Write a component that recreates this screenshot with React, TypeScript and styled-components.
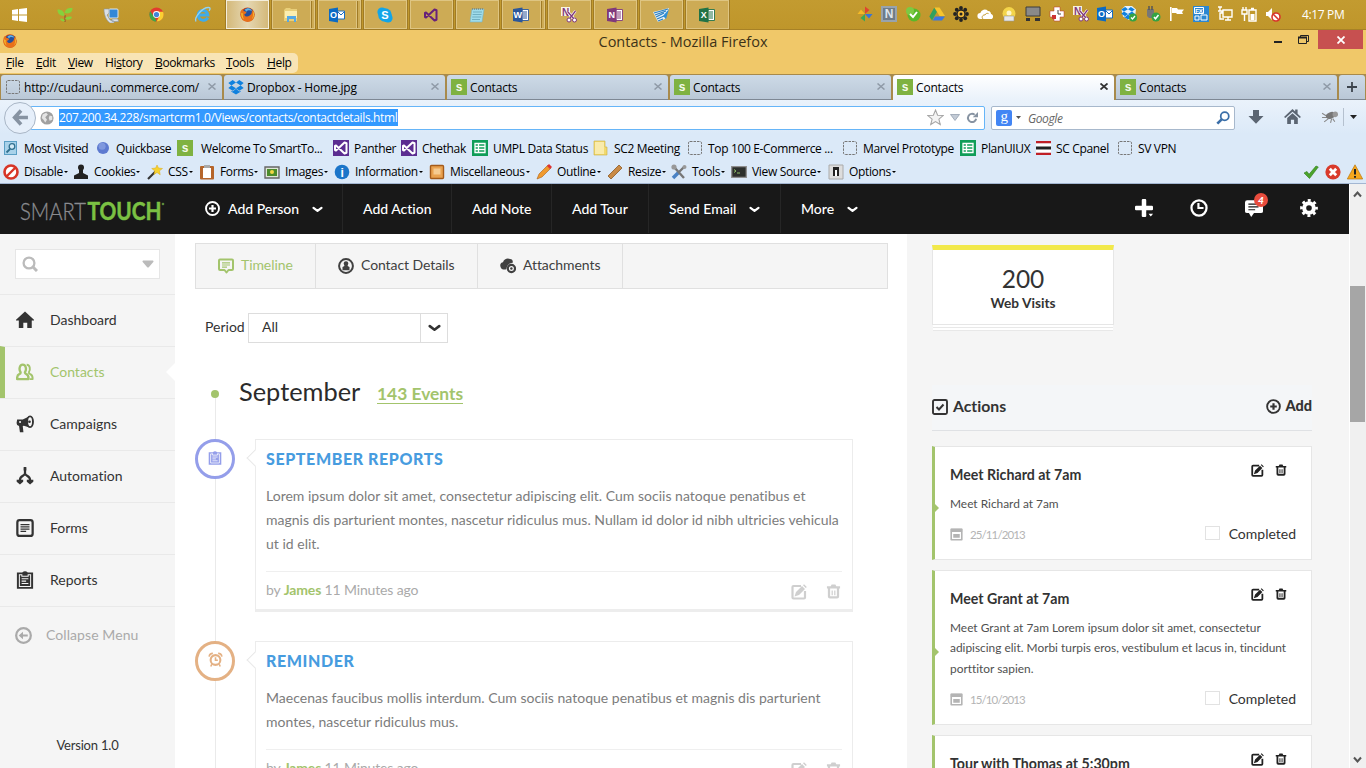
import React from 'react';
import styled, { createGlobalStyle, css } from 'styled-components';

const GREEN = '#a3c46c';
const UI = "'Open Sans', 'Noto Sans', sans-serif";
const SITE = "Lato, 'Liberation Sans', sans-serif";

const Global = createGlobalStyle`
  * { box-sizing: border-box; }
  body { margin: 0; overflow: hidden; font-family: ${SITE}; font-size: 14px; font-variant-ligatures: none; color: #333; background: #fff; }
  svg { display: block; flex: none; }
  p, h1, h2, h3 { margin: 0; }
`;

const Screen = styled.div`
  width: 1366px;
  height: 768px;
  display: flex;
  flex-direction: column;
  overflow: hidden;
`;

/* ---------- Taskbar ---------- */
const Taskbar = styled.div`
  height: 30px;
  display: flex;
  align-items: center;
  background: linear-gradient(#c39b30, #bf962b);
  border-bottom: 1px solid #a78126;
`;
const Pinned = styled.div`
  width: 226px;
  display: flex;
  align-items: center;
  padding-left: 12px;
  gap: 30px;
`;
const TaskButtons = styled.div`
  display: flex;
  gap: 3px;
  height: 29px;
`;
const TaskButton = styled.div<{ $active?: boolean; $stack?: boolean }>`
  width: 43px;
  height: 29px;
  display: flex;
  align-items: center;
  justify-content: center;
  padding-right: ${p => (p.$stack ? 5 : 1)}px;
  border: 1px solid ${p => (p.$active ? '#f4eedc' : '#dec582')};
  outline: 1px solid #a07b25;
  outline-offset: 0;
  background: ${p => (p.$active ? 'linear-gradient(90deg,#d4b97a,#e5d7b2,#d4b97a)' : '#cdab55')};
  ${p =>
    p.$stack &&
    css`
      background: linear-gradient(90deg, transparent 37px, #dec582 37px, #dec582 38px, #a07b25 38px, #a07b25 39px, transparent 39px) #cdab55;
    `}
`;
const Tray = styled.div`
  margin-left: auto;
  display: flex;
  align-items: center;
  gap: 8px;
  padding-bottom: 1px;
`;
const Clock = styled.span`
  width: 77px;
  flex: none;
  padding-left: 13px;
  color: #fff;
  font: 12px ${UI};
  letter-spacing: -0.35px;
  white-space: nowrap;
`;

/* ---------- Firefox chrome ---------- */
const TitleBar = styled.div`
  height: 23px;
  display: grid;
  grid-template-columns: 150px 1fr 150px;
  background: #f0c869;
`;
const TitleIcon = styled.div`
  padding: 4px 0 0 3px;
`;
const TitleText = styled.div`
  text-align: center;
  font: 14.5px/24px ${UI};
  color: #3c3218;
`;
const WindowButtons = styled.div`
  display: flex;
  justify-content: flex-end;
  gap: 9px;
  padding-right: 3px;
`;
const CloseButton = styled.div`
  width: 45px;
  height: 19px;
  display: flex;
  align-items: center;
  justify-content: center;
  background: #c75050;
`;
const MenuRow = styled.div`
  height: 21px;
  background: #f0c869;
`;
const MenuBar = styled.div`
  width: 298px;
  height: 20px;
  display: flex;
  align-items: center;
  padding-left: 6px;
  background: #f8e4b5;
  border-radius: 0 5px 5px 0;
`;
const MenuItem = styled.span<{ $w: number }>`
  width: ${p => p.$w}px;
  font: 12px/20px ${UI};
  letter-spacing: -0.36px;
  color: #000;
  white-space: nowrap;
`;
const TabStrip = styled.div`
  height: 26px;
  display: flex;
  gap: 2px;
  padding: 1px 1px 0;
  background: #a88a4b;
`;
const BrowserTab = styled.div<{ $active?: boolean }>`
  width: 221px;
  height: 25px;
  display: flex;
  align-items: center;
  gap: 3px;
  padding: 0 6px 0 4px;
  border-radius: 3px 3px 0 0;
  border-bottom: 1px solid ${p => (p.$active ? '#eaf2fb' : '#7e8894')};
  background: ${p => (p.$active ? 'linear-gradient(#fff,#eaf2fb)' : 'linear-gradient(#cddae7,#bac8d7)')};
  font: 12px/20px ${UI};
  letter-spacing: -0.18px;
  color: #000;
`;
const TabTitle = styled.span`
  flex: 1;
  padding-top: 2px;
  white-space: nowrap;
`;
const NewTab = styled(BrowserTab)`
  width: 26px;
  justify-content: center;
  padding: 0;
`;
const NavBar = styled.div`
  height: 34px;
  display: flex;
  align-items: center;
  background: linear-gradient(#eaf2fb, #dbe9f8);
`;
const BackButton = styled.div`
  width: 32px;
  height: 32px;
  flex: none;
  margin: 2px -6px 0 4px;
  z-index: 1;
  display: flex;
  align-items: center;
  justify-content: center;
  border: 1px solid #a9b6c6;
  border-radius: 50%;
  background: #e6effa;
`;
const UrlBar = styled.div`
  width: 955px;
  height: 24px;
  flex: none;
  margin-top: 2px;
  display: flex;
  align-items: center;
  padding: 0 6px 0 9px;
  background: #fff;
  border: 1px solid #66b5f8;
  border-radius: 2px;
`;
const UrlText = styled.span`
  margin: 0 auto 0 5px;
  width: 339px;
  height: 17px;
  background: #3399ff;
  color: #fff;
  font: 12px/18px ${UI};
  letter-spacing: -0.35px;
  white-space: nowrap;
`;
const UrlTools = styled.div`
  display: flex;
  align-items: center;
  gap: 6px;
`;
const SearchBar = styled.div`
  width: 244px;
  height: 24px;
  flex: none;
  margin: 2px 0 0 6px;
  display: flex;
  align-items: center;
  gap: 4px;
  padding: 0 4px;
  background: #fff;
  border: 1px solid #a7b8cc;
  border-radius: 2px;
  font: italic 12px ${UI};
  letter-spacing: -0.4px;
  color: #666;
`;
const SearchHint = styled.span`
  flex: 1;
  margin-left: 3px;
  padding-top: 1px;
`;
const NavTools = styled.div`
  flex: 1;
  height: 24px;
  display: flex;
  align-items: center;
  padding-left: 13px;
  gap: 20px;
`;
const OverflowToggle = styled.div`
  width: 16px;
  height: 18px;
  margin-left: -15px;
  display: flex;
  align-items: center;
  padding-left: 6px;
  border-left: 1px solid #b5c1cf;
`;
const LinkBar = styled.div<{ $dev?: boolean }>`
  height: ${p => (p.$dev ? 22 : 28)}px;
  display: flex;
  align-items: center;
  padding-left: ${p => (p.$dev ? 3 : 4)}px;
  background: #dbe9f8;
`;
const ChromeEdge = styled.div`
  height: 1px;
  background: #a3b6d1;
`;
const LinkItem = styled.div<{ $w: number }>`
  width: ${p => p.$w}px;
  display: flex;
  align-items: center;
  font: 12px/20px ${UI};
  letter-spacing: -0.34px;
  color: #000;
  white-space: nowrap;
`;
const LinkLabel = styled.span`
  padding-top: 2px;
`;
const LinkIcon = styled.span<{ $w: number }>`
  width: ${p => p.$w}px;
  flex: none;
`;
const Caret = styled.i`
  margin-left: 1px;
  border: 2.5px solid transparent;
  border-top-color: #000;
  border-bottom: 0;
`;
const Badges = styled.div`
  flex: 1;
  display: flex;
  justify-content: flex-end;
  gap: 6px;
  padding-right: 3px;
`;

/* ---------- Site ---------- */
const Viewport = styled.div`
  height: 584px;
  display: flex;
`;
const Site = styled.div`
  width: 1349px;
  display: flex;
  flex-direction: column;
`;
const ScrollBar = styled.div`
  width: 17px;
  display: flex;
  flex-direction: column;
  justify-content: space-between;
  border-left: 1px solid #fff;
  background: #f0f0f0;
  padding: 6px 1px 4px 0;
`;
const ScrollThumb = styled.div`
  width: 15px;
  height: 136px;
  margin: 88px 0 auto;
  background: #a6a6a6;
`;
const Header = styled.header`
  height: 50px;
  flex: none;
  display: flex;
  background: #181818;
  color: #fff;
`;
const Logo = styled.div`
  width: 175px;
  padding: 10px 0 0 20px;
`;
const HeaderItem = styled.div<{ $w: number; $last?: boolean }>`
  width: ${p => p.$w}px;
  height: 49px;
  display: flex;
  align-items: center;
  gap: 13px;
  padding: 1px 0 0 20px;
  border-right: ${p => (p.$last ? 0 : 1)}px solid #262626;
  font-weight: 500;
  font-size: 14px;
  white-space: nowrap;
`;
const HeaderLabel = styled.span<{ $afterIcon?: boolean }>`
  margin-left: ${p => (p.$afterIcon ? -6 : 0)}px;
  padding-bottom: 1px;
`;
const HeaderTools = styled.div`
  margin-left: auto;
  display: flex;
  align-items: center;
  gap: 37px;
  padding: 0 31px 2px 0;
`;
const Notice = styled.div`
  position: relative;
`;
const NoticeCount = styled.span`
  position: absolute;
  left: 9px;
  top: -6px;
  width: 14px;
  height: 14px;
  border-radius: 50%;
  background: #e84c3d;
  color: #fff;
  font: italic 900 10px/14px ${SITE};
  text-align: center;
`;
const Body = styled.div`
  flex: 1;
  min-height: 0;
  display: flex;
`;

const Sidebar = styled.nav`
  width: 175px;
  display: flex;
  flex-direction: column;
  background: #f5f5f5;
`;
const SideSearch = styled.div`
  height: 30px;
  margin: 15px 15px 15px;
  display: flex;
  align-items: center;
  justify-content: space-between;
  padding: 0 5px 0 6px;
  background: #fff;
  border: 1px solid #e6e6e6;
`;
const SideItem = styled.div<{ $active?: boolean }>`
  height: 52px;
  display: flex;
  align-items: center;
  gap: 16px;
  padding-left: ${p => (p.$active ? 11 : 16)}px;
  border-top: 1px solid #e9e9e9;
  ${p => p.$active && css`border-left: 5px solid ${GREEN};`}
  color: ${p => (p.$active ? GREEN : '#333')};
  span { flex: 1; padding-bottom: 2px; }
`;
const SideNotch = styled.i`
  border: 9px solid transparent;
  border-right-color: #fff;
  border-left: 0;
`;
const Collapse = styled.div`
  height: 58px;
  display: flex;
  align-items: center;
  gap: 14px;
  padding-left: 15px;
  border-top: 1px solid #e9e9e9;
  color: #aaa;
  span { padding-bottom: 2px; letter-spacing: 0.08px; }
`;
const Version = styled.div`
  margin: auto 0 15px;
  text-align: center;
  font-size: 13px;
  letter-spacing: -0.2px;
  line-height: 16px;
`;

const Main = styled.main`
  width: 732px;
  padding: 9px 19px 0 20px;
  background: #fff;
  overflow: hidden;
`;
const TabBox = styled.div`
  height: 46px;
  display: flex;
  background: #f5f5f5;
  border: 1px solid #e0e0e0;
`;
const PageTab = styled.div<{ $w: number; $active?: boolean }>`
  width: ${p => p.$w}px;
  display: flex;
  align-items: center;
  gap: 7px;
  padding-left: 22px;
  border-right: 1px solid #e0e0e0;
  color: ${p => (p.$active ? GREEN : '#404040')};
  letter-spacing: -0.08px;
  span { padding-bottom: 2px; }
`;
const PeriodRow = styled.div`
  display: flex;
  align-items: center;
  margin: 24px 0 0 10px;
`;
const PeriodLabel = styled.label`
  width: 43px;
  padding-bottom: 3px;
`;
const Select = styled.div`
  width: 200px;
  height: 30px;
  display: flex;
  align-items: center;
  border: 1px solid #ddd;
  padding-left: 13px;
`;
const SelectValue = styled.span`
  flex: 1;
  padding-bottom: 3px;
`;
const SelectArrow = styled.div`
  width: 27px;
  height: 28px;
  display: flex;
  align-items: center;
  justify-content: center;
  border-left: 1px solid #ddd;
`;
const MonthRow = styled.div`
  height: 62px;
  margin-top: 34px;
  display: flex;
`;
const MonthTrack = styled.div`
  width: 41px;
  padding-top: 13px;
`;
const MonthDot = styled.div`
  width: 8px;
  height: 8px;
  margin-left: 16px;
  border-radius: 50%;
  background: ${GREEN};
`;
const MonthLine = styled.div`
  width: 1px;
  height: 41px;
  margin-left: 20px;
  background: #eaeaea;
`;
const MonthName = styled.h2`
  width: 121px;
  margin: -1px 0 0 3px;
  font-weight: 400;
  font-size: 25.4px;
  line-height: 30px;
  color: #2b2b2b;
`;
const MonthCount = styled.a`
  margin-left: 17px;
  height: 20px;
  margin-top: 7px;
  font-weight: 700;
  font-size: 17.4px;
  line-height: 20px;
  color: ${GREEN};
  border-bottom: 1px solid ${GREEN};
`;
const EventRow = styled.div`
  display: flex;
`;
const EventTrack = styled.div`
  width: 60px;
  flex: none;
  background: linear-gradient(#eaeaea, #eaeaea) 20px 0 / 1px 100% no-repeat;
`;
const EventBadge = styled.div<{ $color: string }>`
  width: 40px;
  height: 40px;
  display: flex;
  align-items: center;
  justify-content: center;
  padding-bottom: 2px;
  border: 3px solid ${p => p.$color};
  border-radius: 50%;
  background: #fff;
  color: ${p => p.$color};
`;
const EventCard = styled.article`
  position: relative;
  width: 598px;
  margin-bottom: 29px;
  padding: 9px 10px 0;
  border: 1px solid #ececec;
  border-bottom: 3px solid #ededed;
  background: #fff;
`;
const EventNotch = styled.i`
  position: absolute;
  left: -7px;
  top: 12px;
  width: 12px;
  height: 12px;
  border: 1px solid #e8e8e8;
  border-width: 0 0 1px 1px;
  background: #fff;
  transform: rotate(45deg);
`;
const EventTitle = styled.h3`
  font-size: 16px;
  line-height: 20px;
  font-weight: 900;
  letter-spacing: 0.6px;
  color: #479cdf;
`;
const EventText = styled.p`
  margin: 15px 0 15px;
  font-size: 14px;
  line-height: 24px;
  letter-spacing: 0.01px;
  color: #7c7c7c;
  white-space: nowrap;
`;
const EventFooter = styled.div`
  height: 38px;
  display: flex;
  align-items: center;
  border-top: 1px solid #efefef;
  color: #aaa;
  letter-spacing: -0.15px;
  b { color: ${GREEN}; }
  p { flex: 1; padding-bottom: 2px; }
`;
const EventActions = styled.div`
  display: flex;
  gap: 19px;
  padding: 3px 1px 0 0;
  color: #cfcfcf;
`;

const Aside = styled.aside`
  width: 442px;
  padding: 11px 37px 0 25px;
  background: #f5f5f5;
  overflow: hidden;
`;
const Stat = styled.div`
  width: 182px;
  height: 80px;
  padding-top: 13px;
  border: 1px solid #e6e6e6;
  border-top: 5px solid #f2e94a;
  background: #fff;
  text-align: center;
`;
const StatNumber = styled.div`
  font-size: 24.5px;
  line-height: 31px;
`;
const StatLabel = styled.div`
  font-size: 13.7px;
  line-height: 17px;
  font-weight: 700;
`;
const StatLayer = styled.div`
  width: 180px;
  height: 3px;
  margin-left: 1px;
  background: #fff;
  border-bottom: 1px solid #e8e8e8;
`;
const ActionsHead = styled.div`
  height: 46px;
  margin-top: 54px;
  display: flex;
  align-items: center;
  padding-bottom: 1px;
  border-bottom: 1px solid #dfe1e4;
  background: #f4f6f8;
  font-weight: 700;
  font-size: 15.8px;
  gap: 5px;
`;
const ActionsTitle = styled.h2`
  font-size: 15.8px;
  padding-bottom: 2px;
`;
const AddLink = styled.div`
  margin-left: auto;
  display: flex;
  align-items: center;
  gap: 4px;
  font-weight: 900;
  font-size: 14.5px;
  span { padding-bottom: 2px; }
`;
const TaskList = styled.div`
  display: flex;
  flex-direction: column;
  gap: 10px;
  margin-top: 15px;
`;
const TaskCard = styled.article<{ $h: number }>`
  height: ${p => p.$h}px;
  flex: none;
  display: flex;
  background: #fff;
  border: 1px solid #e6e6e6;
  border-left: 3px solid ${GREEN};
`;
const TaskNotch = styled.i`
  align-self: center;
  margin-top: 10px;
  border: 4px solid transparent;
  border-left-color: ${GREEN};
  border-right: 0;
`;
const TaskMain = styled.div`
  flex: 1;
  display: flex;
  flex-direction: column;
  padding: 0 15px 0 11px;
`;
const TaskHead = styled.div`
  display: flex;
  justify-content: space-between;
  padding: 17px 9px 0 0;
`;
const TaskTitle = styled.h3`
  height: 23px;
  font-size: 14.2px;
  line-height: 22px;
  font-weight: 700;
  color: #333;
`;
const TaskTools = styled.div`
  display: flex;
  gap: 11px;
  color: #222;
`;
const TaskText = styled.p`
  margin-top: 7px;
  font-size: 11.9px;
  line-height: 20.5px;
  color: #505050;
  white-space: nowrap;
`;
const TaskFooter = styled.div`
  display: flex;
  align-items: center;
  margin: auto 0 17px;
`;
const CalendarTone = styled.span`
  width: 12px;
  padding-top: 3px;
  color: #b4b4b4;
`;
const TaskDate = styled.span`
  flex: 1;
  margin-left: 8px;
  padding-top: 3px;
  font-size: 11.5px;
  letter-spacing: -0.9px;
  color: #b4b4b4;
`;
const CheckBox = styled.i`
  width: 15px;
  height: 14px;
  margin-right: 9px;
  border: 1px solid #e2e2e2;
`;

/* ---------- Icons ---------- */
const V = ({ w = 16, h = w, box = '0 0 16 16', children }: any) => (
  <svg width={w} height={h} viewBox={box} fill="currentColor">{children}</svg>
);
const Letter = ({ c, x = 8, y = 12, s = 11, fill = '#fff' }: any) => (
  <text x={x} y={y} fontSize={s} fontWeight="700" textAnchor="middle" fill={fill} fontFamily="Liberation Sans, sans-serif">{c}</text>
);
const SIcon = () => <V><path fill="#7fb241" d="M0 0h16v16H0z" /><Letter c="s" y={11.5} s={12} fill="#f4f9ec" /></V>;
const Blank = () => <V w={16}><rect x="1.500" y="1.500" width="13" height="13" rx="1.500" fill="none" stroke="#777" strokeDasharray="2.500 1" /></V>;
const Dropbox = ({ w = 16 }: any) => <V w={w}><path fill="#1081de" d="M4.700 1 8 3.600 3.400 6.400.3 4zM11.300 1l4.400 3-3.100 2.400L8 3.600zM.3 8.900l3.100-2.500L8 9.200l-3.300 2.600zM15.700 8.900l-3.100-2.500L8 9.200l3.300 2.600zM8 9.800l3.300 2.700 1.300-.8v1L8 15.400l-4.600-2.700v-1l1.300.8z" /></V>;
const Firefox = ({ w = 16 }: any) => (
  <V w={w}>
    <circle cx="8" cy="8" r="7.600" fill="#c4441a" />
    <circle cx="8.600" cy="6.600" r="5.600" fill="#264f9b" />
    <path fill="#5fb2e6" d="M5 3c3-2.600 6-2 8 1-3-1-5-1-6 1z" />
    <path fill="#e8701a" d="M.6 4.500C1.500 3 2.400 2.600 3 2.300l.6 2c1.600.2 3.400.8 3.200 1.900-.2 1-2 .9-2.200 2 .6 2.200 3.600 2.600 5.400 1.200 2-1.600 3-2.700 2.600-6 2 1.600 3.200 4.300 2.800 6.600A7.600 7.600 0 0 1 .6 9.500z" />
    <path fill="#f9c12c" d="M13.600 3.500c2 3 1.600 7-.8 9.400 1.300-2.900 1.500-6.300.8-9.400zM1.500 6c-.6 3 .6 5.600 2.600 7-1-2.700-1.600-4-1-6z" />
  </V>
);
const Win = () => <V w={15} h={14} box="0 0 15 14"><path fill="#fff" d="M0 2l6-.9v5.500H0zM7 1l8-1v6.600H7zM0 7.500h6V13l-6-.9zM7 7.500h8V14l-8-1z" /></V>;
const Plant = () => <V><path stroke="#a86b2d" strokeWidth="1.800" d="M8 15V8" /><path fill="#86d13c" d="M7.500 9C2 9 .5 6 .5 2.500c4.500 0 7 2 7 6.500zM7.500 6c1-4.500 4-5.500 8-5 0 4-3 6.500-8 5zM8 12c1-2.500 4-3 7-2-.5 2.500-4 3.500-7 2zM8 14c-1-2-3-3-5-2 1 2 3 3 5 2z" /></V>;
const Phone = () => <V><rect x="6" y="2" width="9" height="9" rx="1" fill="#3488d6" stroke="#dfe7ee" /><path fill="#dbe0e4" stroke="#8c97a3" strokeWidth=".6" d="M1 2h5v4L4 8l3 5 4 1v2H7C4 14 1 9 1 2zM9 12h6l.5 2.500H9z" /></V>;
const Chrome = () => (
  <V w={15}>
    <circle cx="8" cy="8" r="7.500" fill="#e33b2e" /><path fill="#3fa648" d="M1.300 4.500 7 12.500 8 15.500A7.500 7.500 0 0 1 1.300 4.500z" /><path fill="#fbd032" d="M8.500 5H15a7.500 7.500 0 0 1-7 10.500L11 10z" />
    <circle cx="8" cy="8" r="3.700" fill="#fff" /><circle cx="8" cy="8" r="2.800" fill="#4285d8" />
  </V>
);
const IE = () => <V w={17}><path fill="none" stroke="#3eaceb" strokeWidth="2.800" d="M13 11c-2 4-9 3-9-2.500S12 2.500 13 8.500H5" /><path fill="none" stroke="#8fd3f7" strokeWidth="1.300" d="M2 14.500C-1 12 8 .5 14.500 1.500c1 .5.6 2-.3 3" /></V>;
const Folder = () => <V><path fill="#e9cf79" d="M1 3l2-2h4l1 1h6v12H1z" /><path fill="#fbeeb0" d="M2 4h12v7H2z" /><path fill="#56a9e4" d="M4 9h9v6h-2v-3H6v3H4z" /></V>;
const Outlook = () => <V><path fill="#fff" stroke="#1a6dc0" d="M8 4h7.500v8H8z" /><path fill="none" stroke="#1a6dc0" d="m9 5 3 3 3-3" /><path fill="#0b6bc4" d="M0 2l9-1.500v15L0 14z" /><Letter c="O" x={4.600} s={9} y={11.300} /></V>;
const Skype = () => <V><circle cx="5" cy="5" r="4.600" fill="#12a5e8" /><circle cx="11" cy="11" r="4.600" fill="#12a5e8" /><circle cx="8" cy="8" r="6.800" fill="#12a5e8" /><Letter c="S" /></V>;
const VS = ({ bg }: { bg?: boolean }) => <V>{bg && <path fill="#5c2d91" d="M0 0h16v16H0z" />}<path fill="none" stroke={bg ? '#fff' : '#68217a'} strokeWidth="2" strokeLinejoin="round" d="M11.500 2.500 3 10.500 2 10V6l1-.5 8.500 8 2-.8V3.300z" /></V>;
const Notepad = () => <V><path fill="#9fdcea" stroke="#76b3c4" strokeWidth=".6" d="M3 2h12l-2 13H1z" /><path stroke="#5c9cb0" strokeWidth=".7" d="M4 5h9M3.600 7.500h9M3.200 10h9M3 12.500h8" /><path stroke="#6b6b6b" strokeDasharray="1 1" d="M3 2h12" /></V>;
const Office = ({ c, col }: any) => <V><path fill="#fff" stroke={col} strokeWidth=".9" d="M9 2.500h6.500v11H9z" /><path stroke={col} d="M10 5h4M10 7h4M10 9h4M10 11h4" /><path fill={col} d="M0 2l9.500-1.600v15.200L0 14z" /><Letter c={c} x={4.700} s={9} y={11.300} /></V>;
const Snip = () => <V><path fill="#fff" d="M0 0h9v9H0z" opacity=".85" /><Letter c="N" x={4.500} y={9} s={10} fill="#80397b" /><path fill="none" stroke="#fff" strokeWidth="2.800" d="m7 5 6 7M14.500 4 9 11" /><path fill="none" stroke="#80397b" strokeWidth="1.300" d="m7 5 6 7M14.500 4 9 11" /><circle cx="8" cy="13" r="2" fill="#fff" stroke="#80397b" /><circle cx="13.500" cy="13" r="2" fill="#fff" stroke="#80397b" /></V>;
const Remote = () => <V><path fill="#e2f0fa" d="M0 5l16-4-4 11-7 3z" /><path stroke="#2a7fc4" strokeWidth="1.200" d="m1 6 14-4M2 8l11-4M3 10l8-4M4 12l7-3M5 14l5-2" /><path fill="#2f8fd8" d="m10 9 6-7-3 10z" /></V>;
const Pinwheel = () => <V w={16}><path fill="#e0442f" d="M8 8V.5l4.500 3.500z" /><path fill="#3874d8" d="M8 8h7.500L12 12.500z" /><path fill="#3aa757" d="M8 8v7.500L3.500 12z" /><path fill="#f4b927" d="M8 8H.5L4 3.500z" /></V>;
const NBox = () => <V><path fill="#98a3ad" d="M0 0h16v16H0z" /><path fill="#6f7c88" d="M2 2h12v12H2z" /><Letter c="N" s={12} fill="#dfe6ec" /></V>;
const GreenCheck = () => <V><circle cx="9" cy="9" r="6.500" fill="#59b82a" /><circle cx="5" cy="5" r="4" fill="#7cc943" /><path fill="none" stroke="#fff" strokeWidth="2" d="m5 8 3 3 4-5" /></V>;
const Drive = () => <V w={16}><path fill="#f7c52d" d="M5.500 1.500h5l5.500 8.500h-5.500z" /><path fill="#2fa15e" d="m5.200 1.800 2.700 4.200L3 14.500.300 10.500z" /><path fill="#3b77e0" d="M6 10.500h10L13 14.500H3.500z" /></V>;
const Flower = () => <V w={16}><g fill="#222">{[0, 1, 2, 3, 4, 5, 6, 7].map(i => <circle key={i} cx={8 + 6 * Math.cos(i * 0.785)} cy={8 + 6 * Math.sin(i * 0.785)} r="1.900" />)}</g><circle cx="8" cy="8" r="4" fill="#f0b83a" stroke="#222" strokeWidth="1.400" /><circle cx="8" cy="8" r="1.500" fill="#222" /></V>;
const Cloud = () => <V w={16}><path fill="#fff" d="M3.500 13a3 3 0 0 1-.2-6A4.500 4.500 0 0 1 11 5c2.500 0 3 2 3 3 3 .5 2.500 5 0 5z" /><path fill="none" stroke="#c39a30" d="M6 13c-2-2 0-4.500 2-4 .5-1.500 2-2 3.500-1.400" /></V>;
const Disc = () => <V><circle cx="8" cy="7.500" r="6.500" fill="#f4d54a" /><circle cx="8" cy="7" r="2.500" fill="#fff7c8" /><path fill="#e8e8e8" stroke="#999" strokeWidth=".6" d="M3 10h10v5H3z" /></V>;
const Pc = () => <V><path fill="#8a8a8a" stroke="#3c3c3c" d="M1 1h14v9H1z" /><path fill="#333" d="M1 12h4v3H1zM10 12h5v3h-5z" /></V>;
const Plus = () => <V><path fill="#fff" stroke="#b33" strokeWidth=".5" d="M5 1h6v4h4v6h-4v4H5v-4H1V5h4z" /><path fill="#c33" d="M3 9h4v4H3z" /><path fill="none" stroke="#444" d="M9 4v4h3" /></V>;
const Usb = () => <V><path fill="#777" d="M2 3h7v7l-2 2H4l-2-2z" /><path stroke="#555" strokeWidth="1.500" d="M4 0v4M7 0v4" /><circle cx="11" cy="11" r="4.500" fill="#35a343" /><path fill="none" stroke="#fff" strokeWidth="1.500" d="m9 11 1.500 1.800L13.500 9" /></V>;
const Flag = () => <V><path fill="#fff" d="M1 1h1.600v14H1zM3 2h5l1 1.500h6L13 6l1 2H8L7 7H3z" /></V>;
const Fx = () => <V><path fill="#2c87d0" d="M0 0h16v16H0z" /><path fill="none" stroke="#fff" d="M1.500 1.500h9v6h-9zM8 9h6v5H8zM2 10h4v4H2z" /><Letter c="FX" x={6} y={7} s={6} /></V>;
const Net = () => <V><path fill="none" stroke="#fff" strokeWidth="1.400" d="M6 4h9v7H6zM8 14h6M11 11v3M3 1v4M1 1h4M1 5h4v2H3v6h4" /></V>;
const Battery = () => <V><path fill="none" stroke="#fff" strokeWidth="1.400" d="M8 4h7v11H8zM10 2.500h3M1 4h5v4H1zM3.500 8v7M2 1v3M5 1v3" /><path fill="#fff" d="M9.500 8h4v6h-4z" /></V>;
const Mute = () => <V><path fill="#fff" d="M1 6h2l4-4v12l-4-4H1z" /><circle cx="11" cy="11" r="4" fill="#fff" stroke="#d8352a" strokeWidth="1.600" /><path stroke="#d8352a" strokeWidth="1.600" d="m8 8 6 6" /></V>;
const TrayDropbox = () => <V><path fill="#e6f2fc" d="M4 0h7l4 3.500-1 7L8 14l-6-3.500-1.500-7z" /><Dropbox w={14} /><circle cx="12" cy="11.500" r="4" fill="#35a343" /><path fill="none" stroke="#fff" strokeWidth="1.300" d="m10 11.500 1.500 1.500 2.500-3" /></V>;

const TabX = ({ dark }: any) => <V w={8} h={7} box="0 0 8 7"><path stroke={dark ? '#333' : '#8f9aa7'} strokeWidth={dark ? 1.800 : 1.500} d="m.5.500 7 6M7.500.500l-7 6" /></V>;
const Globe = () => <V w={14}><circle cx="8" cy="8" r="7.500" fill="#a0a0a0" /><path fill="#e4e4e4" d="M3 4l4-2 2 2-3 3 2 3-2 3-2-3-2-2zM11 5l3 1v4l-3 1-1-3z" /></V>;
const Sheet = () => <V><path fill="#0f9d58" d="M0 0h16v16H0z" /><path fill="none" stroke="#fff" strokeWidth="1.300" d="M3 3.500h10v9H3zM3 6.500h10M3 9.500h10M6.500 3.500v9" /></V>;
const Note = () => <V><path fill="#f1d96e" stroke="#cfae3c" strokeWidth=".6" d="M1 1h11v6h2v8H1z" /><path fill="#f9ebab" d="M2 2h9v12H2z" /></V>;
const Visited = () => <V><rect x=".5" y="1.500" width="12" height="13" fill="#a9d2ea" stroke="#5a9ec4" /><circle cx="8" cy="6.500" r="2.800" fill="#d4eaf6" stroke="#31708f" strokeWidth="1.300" /><path stroke="#31708f" strokeWidth="1.800" d="m6 9-3.500 3.500" /></V>;
const Ball = () => <V w={14}><circle cx="8" cy="8" r="6.900" fill="#5d7ad0" /><circle cx="7" cy="6" r="4" fill="#8fa5e4" opacity=".7" /></V>;
const Bars = () => <V><path fill="#c01f26" d="M0 1h15v2.500H0zM0 12.500h15V15H0z" /><path fill="#fff" d="M0 3.500h15v9H0z" /><path fill="#222" d="M0 6.500h15v3H0z" /></V>;
const Forbid = () => <V><circle cx="8" cy="8" r="6.500" fill="#fff" stroke="#d73527" strokeWidth="2.600" /><path stroke="#d73527" strokeWidth="2.400" d="m12.500 3.500-9 9" /></V>;
const Stamp = () => <V><circle cx="8" cy="3.500" r="3" fill="#222" /><path fill="#222" d="M6 5h4v4l5 2.500V15H1v-3.500L6 9z" /></V>;
const Wand = () => <V><path stroke="#333" strokeWidth="2.200" d="m1 15 8-8" /><path fill="#f7d22f" stroke="#d9a81b" strokeWidth=".5" d="m10 1 1.500 3 4 .5-3 2.300.7 4-3.200-2.300L7 10.500l.7-3.700L4.700 4.500 8.700 4z" /></V>;
const Clip = () => <V><rect x="1" y="2" width="14" height="13.500" rx="1" fill="#b5652b" /><path fill="#fff" d="M4 4h8v10H4z" /><path fill="#aaa" d="M5 1h6v3H5z" /></V>;
const Photo = () => <V><path fill="#dfe6d8" stroke="#666" strokeWidth="1.400" d="M1 3h14v11H1z" /><path fill="#4c8b2b" d="M3 5h10v7H3z" /><circle cx="8" cy="8" r="2" fill="#f2d644" /></V>;
const Info = () => <V><circle cx="8" cy="8" r="7.300" fill="#1b75c9" /><Letter c="i" y={12.500} s={12} /></V>;
const Book = () => <V><rect x="1.500" y="1.500" width="13" height="13" rx="1" fill="#e9a250" stroke="#a45b1b" strokeWidth="1.400" /><path fill="#f6cb90" d="M4.500 4.500h7v6h-7z" /></V>;
const Pencil = () => <V><path fill="#f09a2e" stroke="#a9611a" strokeWidth=".6" d="m1 15 2-5L12 1l3 3-9 9z" /><path fill="#d33" d="m11 2 2-2 3 3-2 2z" /></V>;
const Ruler = () => <V><path fill="#c98a45" stroke="#8d5a24" strokeWidth=".8" d="m1 12 11-11 3 3L4 15z" /></V>;
const Tools = () => <V><path stroke="#4a82c4" strokeWidth="3.600" d="m2 14 6-6" /><path fill="none" stroke="#777" strokeWidth="2.400" d="m3 3 10 11M8 8l5-5" /><circle cx="3" cy="3" r="2.600" fill="#999" /><circle cx="13.500" cy="3" r="2" fill="#999" /></V>;
const Term = () => <V><path fill="#2c2f2c" stroke="#8f8f8f" strokeWidth="1.300" d="M.7 2.700h14.600v10.600H.7z" /><path stroke="#8fc06a" d="M3 5.500l2 1.500-2 1.500M6 9h3" fill="none" /></V>;
const Switch = () => <V><path fill="#ddd" stroke="#aaa" d="M1 1h14v14H1z" /><path fill="#222" d="M5 3h6v9H5z" /><path fill="#fff" d="M7 6h2v6H7z" /></V>;

const PlusCircle = ({ w = 15, sw = 2 }: any) => <V w={w}><circle cx="8" cy="8" r="6.800" fill="none" stroke="currentColor" strokeWidth={sw} /><path stroke="currentColor" strokeWidth={sw + .3} d="M8 4.500v7M4.500 8h7" /></V>;
const Chevron = ({ w = 11, dark }: any) => <V w={w} h={w * .6} box="0 0 11 6.600"><path fill="none" stroke={dark ? '#333' : '#fff'} strokeWidth="2.200" strokeLinecap="round" strokeLinejoin="round" d="M1.500 1.800 5.500 4.800 9.500 1.800" /></V>;
const BubbleIcon = () => <V><path fill="none" stroke="currentColor" strokeWidth="2" strokeLinejoin="round" d="M2 1.500h12q1 0 1 1V11q0 1-1 1h-3.500L8.500 14.500 6.500 12H2q-1 0-1-1V2.500q0-1 1-1z" /><path stroke="currentColor" strokeWidth="1.200" d="M4 4.800h8M4 7h8M4 9.200h5" /></V>;
const PersonCircle = () => <V><circle cx="8" cy="8" r="6.900" fill="none" stroke="currentColor" strokeWidth="2" /><path d="M8 3.200a2.400 2.400 0 0 1 1.800 3.900L9.600 8l1.900 1v3.200h-7V9l1.900-1-.2-.9A2.400 2.400 0 0 1 8 3.200z" /></V>;
const CloudGear = () => <V><path d="M1 10C-.7 7 .6 4.500 3 4.200 4 .5 8-.3 10 1c2.200 0 3.200 1.700 2.700 3.800C9 5 6.800 7.500 6.300 11.300 4 11.800 2 11.500 1 10z" /><path fillRule="evenodd" d="M11.400 5.800a4.700 4.700 0 1 1 0 9.400 4.700 4.700 0 0 1 0-9.400zm0 2.200a2.500 2.500 0 1 0 0 5 2.500 2.500 0 0 0 0-5z" /><circle cx="11.400" cy="10.500" r="1.200" /></V>;
const Home = () => <V w={18}><path d="M8 .5l8 7.300v.7h-2V15h-4v-4.500H6.500V15h-4V8.500H0v-.7z" /></V>;
const People = () => <V w={18}><path fill="none" stroke="currentColor" strokeWidth="2.100" strokeLinejoin="round" d="M6 1.500c3.200 0 3.400 4.800 2 6.500-.3 1 .3 1.500 1.200 1.900 1.500.6 2 1.800 1.900 4.400H1c-.1-2.600.4-3.800 1.900-4.400C3.800 9.500 4.300 9 4 8 2.600 6.300 2.800 1.500 6 1.500z" /><path fill="none" stroke="currentColor" strokeWidth="1.700" strokeLinejoin="round" d="M9.500 1.500c3.200 0 3.400 4.800 2 6.500-.3 1 .3 1.500 1.200 1.900 1.500.6 2.200 1.800 2.100 4.400h-2.500" /></V>;
const Horn = () => <V w={18}><path d="M1 4h5l6-2.800V11L7 9.500l-1 .3.600 5.500H3.500L2.700 9.800Q.5 9.500.5 7z" /><ellipse cx="12.500" cy="6" rx="2.600" ry="4.800" fill="#f5f5f5" stroke="currentColor" strokeWidth="1.700" /><circle cx="12" cy="6" r="1.200" /><circle cx="3.600" cy="6.200" r=".9" fill="#f5f5f5" /></V>;
const Fork = () => <V w={18}><path fill="none" stroke="currentColor" strokeWidth="2" d="M8 1v5.500M8 5.500C8 8 3.500 7.500 3.500 11.500M8 5.500c0 2.500 4.500 2 4.500 6" /><path d="M6.800 0h2.400v3H6.800zM.6 11.300h5.800v1.900L3.500 15.500.6 13.200zM9.600 11.300h5.800v1.900l-2.900 2.300-2.900-2.300z" /></V>;
const Form = () => <V w={18}><rect x="1.200" y="1" width="13.600" height="14" rx="2" fill="none" stroke="currentColor" strokeWidth="2" /><path stroke="currentColor" d="M4 5h8M4 7h8M4 9h8M4 11h5" /></V>;
const Report = ({ w = 18, line = '#f5f5f5' }: any) => <V w={w}><path d="M.8 1.300h4.700Q8-1 10.500 1.300h4.700v14.400H.8z" /><path fill="none" stroke={line} strokeWidth=".9" d="M5 3.300H3v10.400h10V3.300h-2M5.200 2.800v1.900h5.600V2.800M5 6.900h6M5 9h4M5 11.200h6" /></V>;
const BackCircle = () => <V w={17}><circle cx="8" cy="8" r="6.900" fill="none" stroke="currentColor" strokeWidth="2.100" /><path d="m3.500 8 4-3.500V7H12v2H7.500v2.500z" /></V>;
const Alarm = () => <V w={15}><circle cx="8" cy="8.500" r="5.200" fill="none" stroke="currentColor" strokeWidth="2.200" /><path fill="none" stroke="currentColor" strokeWidth="1.700" d="M8 5.500v3.300h2.500M1.200 5C1.500 2.300 3 1.500 5.200 1.500M14.800 5c-.3-2.700-1.800-3.500-4-3.500M4 13l-1 2.500M12 13l1 2.500" /></V>;
const Edit = ({ w = 16 }: any) => <V w={w}><path fill="none" stroke="currentColor" strokeWidth="2.200" d="M10 2H2.500q-1 0-1 1v10.500q0 1 1 1H13q1 0 1-1V7" /><path d="M3.500 12.500 5 8l6-6 3 3-6 6zM12 1.300l1-1 2.800 2.800-1 1z" /></V>;
const Trash = ({ w = 15 }: any) => <V w={w}><path d="M1 2.500h4l1-2h4l1 2h4v2.300H1z" /><path fill="none" stroke="currentColor" strokeWidth="2.400" d="M3.200 4v9.300q0 1 1 1h7.600q1 0 1-1V4" /><path stroke="currentColor" strokeWidth="1.300" d="M6.600 7v5M9.400 7v5" /></V>;
const Calendar = () => <V w={13}><path fill="none" stroke="currentColor" strokeWidth="2" strokeLinejoin="round" d="M1.500 1.500h13v13h-13z" /><path d="M1 1h14v4H1zM4 7.500h8v4.500H4z" /></V>;
const CheckSquare = () => <V w={16}><rect x="1" y="1" width="14" height="14" rx="1.500" fill="none" stroke="currentColor" strokeWidth="1.900" /><path fill="none" stroke="currentColor" strokeWidth="2" d="m4.500 8 2.500 2.500L11.500 5.500" /></V>;

const Para = ({ lines }: { lines: string[] }) => (
  <>{lines.map((l, i) => <React.Fragment key={i}>{i > 0 && <br />}{l}</React.Fragment>)}</>
);

const menus: [string, string, number][] = [['F', 'ile', 30], ['E', 'dit', 32], ['V', 'iew', 37], ['Hi', 'story', 50], ['B', 'ookmarks', 71], ['T', 'ools', 41], ['H', 'elp', 30]];
const bookmarks: [React.ReactNode, string, number, number][] = [
  [<Visited />, 'Most Visited', 92, 20], [<Ball />, 'Quickbase', 81, 20], [<SIcon />, 'Welcome To SmartTo...', 156, 24],
  [<VS bg />, 'Panther', 68, 21], [<VS bg />, 'Chethak', 71, 21], [<Sheet />, 'UMPL Data Status', 121, 21], [<Note />, 'SC2 Meeting', 94, 21],
  [<Blank />, 'Top 100 E-Commerce ...', 155, 21], [<Blank />, 'Marvel Prototype', 118, 21], [<Sheet />, 'PlanUIUX', 76, 21],
  [<Bars />, 'SC Cpanel', 81, 20], [<Blank />, 'SV VPN', 60, 21],
];
const devItems: [React.ReactNode, string, number][] = [
  [<Forbid />, 'Disable', 70], [<Stamp />, 'Cookies', 74], [<Wand />, 'CSS', 52], [<Clip />, 'Forms', 65], [<Photo />, 'Images', 70],
  [<Info />, 'Information', 95], [<Book />, 'Miscellaneous', 107], [<Pencil />, 'Outline', 71], [<Ruler />, 'Resize', 64], [<Tools />, 'Tools', 60],
  [<Term />, 'View Source', 97], [<Switch />, 'Options', 70],
];
const sideItems: [React.ReactNode, string][] = [
  [<Home />, 'Dashboard'], [<People />, 'Contacts'], [<Horn />, 'Campaigns'], [<Fork />, 'Automation'], [<Form />, 'Forms'], [<Report />, 'Reports'],
];
const events = [
  { icon: <Report w={14} line="#fff" />, color: '#949eea', title: 'SEPTEMBER REPORTS', text: ['Lorem ipsum dolor sit amet, consectetur adipiscing elit. Cum sociis natoque penatibus et', 'magnis dis parturient montes, nascetur ridiculus mus. Nullam id dolor id nibh ultricies vehicula', 'ut id elit.'] },
  { icon: <Alarm />, color: '#e4b184', title: 'REMINDER', text: ['Maecenas faucibus mollis interdum. Cum sociis natoque penatibus et magnis dis parturient', 'montes, nascetur ridiculus mus.'] },
];
const tasks = [
  { h: 114, title: 'Meet Richard at 7am', text: ['Meet Richard at 7am'], date: '25/11/2013' },
  { h: 155, title: 'Meet Grant at 7am', text: ['Meet Grant at 7am Lorem ipsum dolor sit amet, consectetur', 'adipiscing elit. Morbi turpis eros, vestibulum et lacus in, tincidunt', 'porttitor sapien.'], date: '15/10/2013' },
  { h: 155, title: 'Tour with Thomas at 5:30pm', text: ['Tour with Thomas at 5:30pm'], date: '15/10/2013' },
];

export default function App() {
  return (
    <Screen>
      <Global />
      <Taskbar>
        <Pinned><Win /><Plant /><Phone /><Chrome /><IE /></Pinned>
        <TaskButtons>
          <TaskButton $active><Firefox w={15} /></TaskButton>
          <TaskButton $stack><Folder /></TaskButton>
          <TaskButton $stack><Outlook /></TaskButton>
          <TaskButton><Skype /></TaskButton>
          <TaskButton><VS /></TaskButton>
          <TaskButton><Notepad /></TaskButton>
          <TaskButton $stack><Office c="W" col="#2b579a" /></TaskButton>
          <TaskButton><Snip /></TaskButton>
          <TaskButton><Office c="N" col="#80397b" /></TaskButton>
          <TaskButton><Remote /></TaskButton>
          <TaskButton><Office c="X" col="#217346" /></TaskButton>
        </TaskButtons>
        <Tray>
          <Pinwheel /><NBox /><GreenCheck /><Drive /><Flower /><Cloud /><Disc /><Pc /><Plus /><Snip /><Outlook />
          <TrayDropbox /><Usb /><Flag /><Fx /><Net /><Battery /><Mute />
          <Clock>4:17 PM</Clock>
        </Tray>
      </Taskbar>

      <TitleBar>
        <TitleIcon><Firefox w={14} /></TitleIcon>
        <TitleText>Contacts - Mozilla Firefox</TitleText>
        <WindowButtons>
          <V w={74} h={19} box="0 0 74 19">
            <path fill="#222" d="M39 11h8v2h-8z" />
            <path fill="none" stroke="#222" d="M63.500 7.500h8v6h-8zM65.500 7V5.500h8v6H72" /><path fill="#222" d="M63 6.500h9v2h-9z" />
          </V>
          <CloseButton><V w={8} box="0 0 8 8"><path stroke="#fff" strokeWidth="1.800" d="m.5.5 7 7M7.500.5l-7 7" /></V></CloseButton>
        </WindowButtons>
      </TitleBar>
      <MenuRow>
        <MenuBar>
          {menus.map(([u, rest, w]) => (
            <MenuItem key={rest} $w={w}>{u.length > 1 ? <>Hi<u>s</u>tory</> : <><u>{u}</u>{rest}</>}</MenuItem>
          ))}
        </MenuBar>
      </MenuRow>
      <TabStrip>
        <BrowserTab><Blank /><TabTitle>http://cudauni...commerce.com/</TabTitle><TabX /></BrowserTab>
        <BrowserTab><Dropbox /><TabTitle>Dropbox - Home.jpg</TabTitle><TabX /></BrowserTab>
        {[0, 1, 2, 3].map(i => (
          <BrowserTab key={i} $active={i === 2}><SIcon /><TabTitle>Contacts</TabTitle><TabX dark={i === 2} /></BrowserTab>
        ))}
        <NewTab><V w={10} box="0 0 10 10"><path stroke="#3c444d" strokeWidth="1.800" d="M5 0v10M0 5h10" /></V></NewTab>
      </TabStrip>
      <NavBar>
        <BackButton><V w={17}><path fill="none" stroke="#8793a2" strokeWidth="3.400" d="M8.500 1.500 2.500 8l6 6.500M2.500 8H15" /></V></BackButton>
        <UrlBar>
          <Globe />
          <UrlText>207.200.34.228/smartcrm1.0/Views/contacts/contactdetails.html</UrlText>
          <UrlTools>
            <V w={17}><path fill="#f4f4f4" stroke="#a5a5a5" d="m8 1 2 4.800 5.200.4-4 3.400 1.300 5L8 11.800l-4.500 2.800 1.300-5-4-3.400 5.200-.4z" /></V>
            <V w={10} h={7} box="0 0 10 7"><path fill="#c3cbd6" stroke="#96a1b0" strokeWidth=".8" d="M.5.5h9L5 6.500z" /></V>
            <V w={12}><path fill="none" stroke="#8793a2" strokeWidth="2.600" d="M13.500 9A5.500 5.500 0 1 1 11.500 3.600" /><path fill="#8793a2" d="M9 7h7V0z" /></V>
          </UrlTools>
        </UrlBar>
        <SearchBar>
          <V><rect width="16" height="16" rx="2" fill="#4285f4" /><text x="8" y="11" textAnchor="middle" fontSize="15" fontStyle="normal" fill="#fff" fontFamily="Liberation Serif, serif">g</text></V>
          <V w={5} h={3} box="0 0 5 3"><path fill="#555" d="M0 0h5L2.500 3z" /></V>
          <SearchHint>Google</SearchHint>
          <V w={14}><circle cx="10" cy="6" r="4.600" fill="none" stroke="#3a6ea8" strokeWidth="2" /><path stroke="#3a6ea8" strokeWidth="3" d="m6.500 9.500-5 5" /></V>
        </SearchBar>
        <NavTools>
          <V w={16}><path fill="#5b6572" d="M5 1h6v6h4.500L8 14.800.5 7H5z" /></V>
          <V w={17}><path fill="#5b6572" d="M8 1l2.500 2.300V1.500h2.300v4L16 8.500l-1.300 1L8 3.600 1.300 9.500 0 8.500z" /><path fill="#5b6572" d="m8 5 5 4.500V15H9.500v-4h-3v4H3V9.500z" /></V>
          <V w={17}><path stroke="#888" d="M1 5l5 3M1 9h5M3 13l4-3M9 14l1-4M13 13l-2-3" /><ellipse cx="9" cy="7" rx="4.500" ry="3" fill="#777" transform="rotate(-20 9 7)" /><circle cx="13.500" cy="6" r="2.600" fill="#999" /></V>
          <OverflowToggle><V w={7} h={4} box="0 0 7 4"><path fill="#222" d="M0 0h7L3.500 4z" /></V></OverflowToggle>
        </NavTools>
      </NavBar>
      <LinkBar>
        {bookmarks.map(([icon, text, w, iw]) => <LinkItem key={text} $w={w}><LinkIcon $w={iw}>{icon}</LinkIcon><LinkLabel>{text}</LinkLabel></LinkItem>)}
      </LinkBar>
      <LinkBar $dev>
        {devItems.map(([icon, text, w]) => <LinkItem key={text} $w={w}><LinkIcon $w={21}>{icon}</LinkIcon>{text}<Caret /></LinkItem>)}
        <Badges>
          <V><path fill="#4ba42c" stroke="#2d7a17" strokeWidth=".6" d="m1 9 3-1.500 2 2.800L13 2l2.300 1L6.500 14.500z" /></V>
          <V><circle cx="8" cy="8" r="7.600" fill="#d93a2b" /><path stroke="#fff" strokeWidth="2.800" d="m4.800 4.800 6.400 6.400M11.200 4.800l-6.400 6.400" /></V>
          <V><path fill="#f6a71c" stroke="#b9770f" strokeWidth=".7" d="M8 .8 15.700 15H.3z" /><path fill="#222" d="M7 5h2v5.500H7zM7 12h2v1.800H7z" /></V>
        </Badges>
      </LinkBar>
      <ChromeEdge />

      <Viewport>
        <Site>
          <Header>
            <Logo>
              <V w={148} h={34} box="0 0 148 34">
                <text x="0" y="25.500" fontSize="24" fontWeight="300" textLength="66" lengthAdjust="spacingAndGlyphs" fill="#8a8b8f" stroke="#8a8b8f" strokeWidth=".3" fontFamily="Lato, sans-serif">SMART</text>
                <text x="67.500" y="25.500" fontSize="24" fontWeight="700" textLength="74" lengthAdjust="spacingAndGlyphs" fill="#7bc143" stroke="#7bc143" strokeWidth=".5" fontFamily="Lato, sans-serif">TOUCH</text>
                <circle cx="143" cy="10" r="1.300" fill="#5c8a3a" />
              </V>
            </Logo>
            <HeaderItem $w={168}>
              <V w={26} h={15} box="0 0 26 15"><circle cx="17.500" cy="7.500" r="6.500" fill="none" stroke="#fff" strokeWidth="1.900" /><path stroke="#fff" strokeWidth="2.200" d="M17.500 4v7M14 7.500h7" /></V>
              <HeaderLabel $afterIcon>Add Person</HeaderLabel><Chevron />
            </HeaderItem>
            <HeaderItem $w={109}><HeaderLabel>Add Action</HeaderLabel></HeaderItem>
            <HeaderItem $w={100}><HeaderLabel>Add Note</HeaderLabel></HeaderItem>
            <HeaderItem $w={97}><HeaderLabel>Add Tour</HeaderLabel></HeaderItem>
            <HeaderItem $w={132}><HeaderLabel>Send Email</HeaderLabel><Chevron /></HeaderItem>
            <HeaderItem $w={100} $last><HeaderLabel>More</HeaderLabel><Chevron /></HeaderItem>
            <HeaderTools>
              <V w={18}><path d="M7 0h2q1 0 1 1v5h5q1 0 1 1v2q0 1-1 1h-5v5q0 1-1 1H7q-1 0-1-1v-5H1q-1 0-1-1V7q0-1 1-1h5V1q0-1 1-1z" /><path stroke="#181818" strokeWidth="1" d="M11 12.500h6L14 16.500z" /></V>
              <V w={18}><circle cx="8" cy="8" r="6.700" fill="none" stroke="#fff" strokeWidth="2" /><path fill="none" stroke="#fff" strokeWidth="1.900" d="M7.500 3.500V8H12" /></V>
              <Notice>
                <V w={18}><path d="M2 1h12q2 0 2 2v8q0 1.500-2 1.500H8L5.500 16 3.500 12.500H2Q0 12.500 0 11V3q0-2 2-2z" /><path stroke="#181818" d="M3 4.500h8M3 7h9M3 9.500h6" /></V>
                <NoticeCount>4</NoticeCount>
              </Notice>
              <V w={18}><circle cx="8" cy="8" r="4.300" fill="none" stroke="#fff" strokeWidth="3.600" /><circle cx="8" cy="8" r="6.700" fill="none" stroke="#fff" strokeWidth="2.400" strokeDasharray="2.630 2.630" strokeDashoffset="1.300" /></V>
            </HeaderTools>
          </Header>
          <Body>
            <Sidebar>
              <SideSearch>
                <V w={16}><circle cx="7" cy="7" r="5.400" fill="none" stroke="#bbb" strokeWidth="2.300" /><path stroke="#bbb" strokeWidth="3" d="m11 11 4 4" /></V>
                <V w={12} h={8} box="0 0 12 8"><path fill="#bbb" d="M1 .5h10q1 .7.3 1.500L7 7q-1 1-2 0L.7 2Q0 1.200 1 .5z" /></V>
              </SideSearch>
              {sideItems.map(([icon, text]) => (
                <SideItem key={text} $active={text === 'Contacts'}>{icon}<span>{text}</span>{text === 'Contacts' && <SideNotch />}</SideItem>
              ))}
              <Collapse><BackCircle /><span>Collapse Menu</span></Collapse>
              <Version>Version 1.0</Version>
            </Sidebar>

            <Main>
              <TabBox>
                <PageTab $w={120} $active><BubbleIcon /><span>Timeline</span></PageTab>
                <PageTab $w={162}><PersonCircle /><span>Contact Details</span></PageTab>
                <PageTab $w={145}><CloudGear /><span>Attachments</span></PageTab>
              </TabBox>
              <PeriodRow>
                <PeriodLabel>Period</PeriodLabel>
                <Select><SelectValue>All</SelectValue><SelectArrow><Chevron w={13} dark /></SelectArrow></Select>
              </PeriodRow>
              <MonthRow>
                <MonthTrack><MonthDot /><MonthLine /></MonthTrack>
                <MonthName>September</MonthName>
                <MonthCount>143 Events</MonthCount>
              </MonthRow>
              {events.map(e => (
                <EventRow key={e.title}>
                  <EventTrack><EventBadge $color={e.color}>{e.icon}</EventBadge></EventTrack>
                  <EventCard>
                    <EventNotch />
                    <EventTitle>{e.title}</EventTitle>
                    <EventText><Para lines={e.text} /></EventText>
                    <EventFooter>
                      <p>by <b>James</b> 11 Minutes ago</p>
                      <EventActions><Edit /><Trash /></EventActions>
                    </EventFooter>
                  </EventCard>
                </EventRow>
              ))}
            </Main>

            <Aside>
              <Stat><StatNumber>200</StatNumber><StatLabel>Web Visits</StatLabel></Stat>
              <StatLayer /><StatLayer />
              <ActionsHead><CheckSquare /><ActionsTitle>Actions</ActionsTitle><AddLink><PlusCircle w={15} /><span>Add</span></AddLink></ActionsHead>
              <TaskList>
                {tasks.map(t => (
                  <TaskCard key={t.title} $h={t.h}>
                    <TaskNotch />
                    <TaskMain>
                      <TaskHead><TaskTitle>{t.title}</TaskTitle><TaskTools><Edit w={13} /><Trash w={12} /></TaskTools></TaskHead>
                      <TaskText><Para lines={t.text} /></TaskText>
                      <TaskFooter><CalendarTone><Calendar /></CalendarTone><TaskDate>{t.date}</TaskDate><CheckBox />Completed</TaskFooter>
                    </TaskMain>
                  </TaskCard>
                ))}
              </TaskList>
            </Aside>
          </Body>
        </Site>
        <ScrollBar>
          <V w={15} h={8} box="0 0 15 8"><path fill="none" stroke="#555" strokeWidth="2" d="m4 6.500 3.500-4 3.500 4" /></V>
          <ScrollThumb />
          <V w={15} h={8} box="0 0 15 8"><path fill="none" stroke="#555" strokeWidth="2" d="m4 1.500 3.500 4 3.500-4" /></V>
        </ScrollBar>
      </Viewport>
    </Screen>
  );
}
